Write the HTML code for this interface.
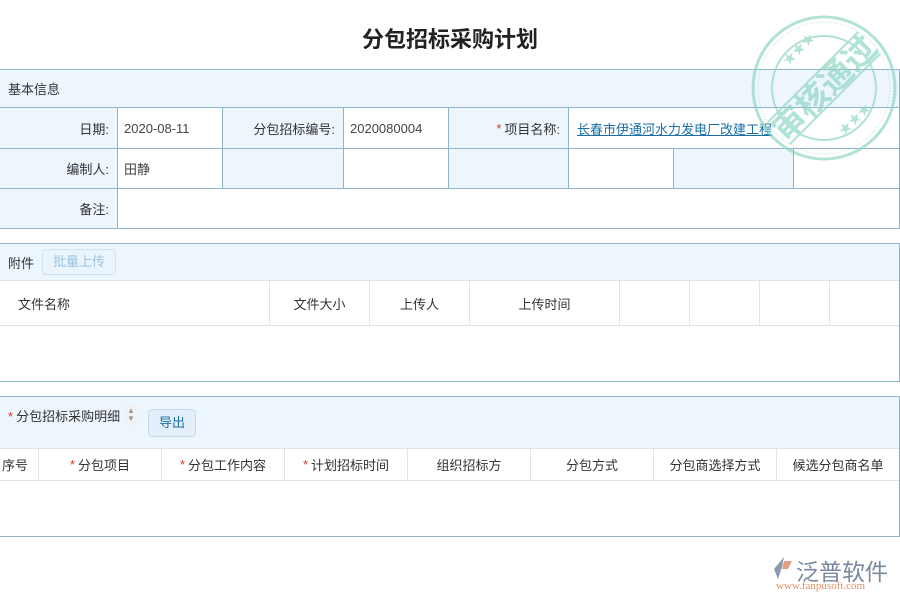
<!DOCTYPE html>
<html><head><meta charset="utf-8">
<style>
*{margin:0;padding:0;box-sizing:border-box}
body{width:900px;height:600px;background:#fff;position:relative;overflow:hidden;font-family:"Liberation Sans","Noto Sans CJK SC",sans-serif;font-size:13px;color:#333}
.a{position:absolute}
.t{position:absolute;left:0;width:900px;top:22px;text-align:center;font-size:22px;font-weight:bold;color:#222}
.c{position:absolute;border-right:1px solid #8fb3c8;border-bottom:1px solid #8fb3c8;display:flex;align-items:center}
.l{background:#eef6fd;justify-content:flex-end;padding-right:8px}
.v{background:#fff;padding-left:6px;color:#444}
.hd{background:#eef6fd}
.th{position:absolute;border-right:1px solid #dde3e8;display:flex;align-items:center;justify-content:center;height:100%;top:0}
.r{color:#e03030;margin-right:3px}
</style></head><body>
<div class="t">分包招标采购计划</div>

<div class="a hd" style="left:0;top:69px;width:900px;height:39px;border-top:1px solid #8fb3c8;border-bottom:1px solid #8fb3c8;border-right:1px solid #8fb3c8"></div>
<div class="a" style="left:8px;top:79px">基本信息</div>
<div class="c l" style="left:0;top:108px;width:118px;height:41px">日期:</div>
<div class="c v" style="left:118px;top:108px;width:105px;height:41px">2020-08-11</div>
<div class="c l" style="left:223px;top:108px;width:121px;height:41px">分包招标编号:</div>
<div class="c v" style="left:344px;top:108px;width:105px;height:41px">2020080004</div>
<div class="c l" style="left:449px;top:108px;width:120px;height:41px"><span class="r">*</span>项目名称:</div>
<div class="c v" style="left:569px;top:108px;width:331px;height:41px;color:#1a6fa8;text-decoration:underline;padding-left:8px">长春市伊通河水力发电厂改建工程</div>
<div class="c l" style="left:0;top:149px;width:118px;height:40px">编制人:</div>
<div class="c v" style="left:118px;top:149px;width:105px;height:40px">田静</div>
<div class="c l" style="left:223px;top:149px;width:121px;height:40px"></div>
<div class="c v" style="left:344px;top:149px;width:105px;height:40px"></div>
<div class="c l" style="left:449px;top:149px;width:120px;height:40px"></div>
<div class="c v" style="left:569px;top:149px;width:105px;height:40px"></div>
<div class="c l" style="left:674px;top:149px;width:120px;height:40px"></div>
<div class="c v" style="left:794px;top:149px;width:106px;height:40px"></div>
<div class="c l" style="left:0;top:189px;width:118px;height:40px">备注:</div>
<div class="c v" style="left:118px;top:189px;width:782px;height:40px"></div>

<div class="a" style="left:0;top:243px;width:900px;height:139px;border-top:1px solid #8fb3c8;border-bottom:1px solid #8fb3c8;border-right:1px solid #8fb3c8"></div>
<div class="a hd" style="left:0;top:244px;width:899px;height:37px;border-bottom:1px solid #dde3e8"></div>
<div class="a" style="left:8px;top:253px">附件</div>
<div class="a" style="left:42px;top:249px;width:74px;height:26px;border:1px solid #cfe3f2;border-radius:4px;background:#eaf4fc;color:#9cc4e0;text-align:center;line-height:24px">批量上传</div>
<div class="a" style="left:0;top:281px;width:899px;height:45px;border-bottom:1px solid #dde3e8">
<div class="th" style="left:0;width:270px;justify-content:flex-start;padding-left:18px">文件名称</div>
<div class="th" style="left:270px;width:100px">文件大小</div>
<div class="th" style="left:370px;width:100px">上传人</div>
<div class="th" style="left:470px;width:150px">上传时间</div>
<div class="th" style="left:620px;width:70px"></div>
<div class="th" style="left:690px;width:70px"></div>
<div class="th" style="left:760px;width:70px"></div>
</div>

<div class="a" style="left:0;top:396px;width:900px;height:141px;border-top:1px solid #8fb3c8;border-bottom:1px solid #8fb3c8;border-right:1px solid #8fb3c8"></div>
<div class="a hd" style="left:0;top:397px;width:899px;height:52px;border-bottom:1px solid #dde3e8"></div>
<div class="a" style="left:8px;top:406px"><span class="r">*</span>分包招标采购明细</div>
<div class="a" style="left:125px;top:405px;width:12px;height:20px;background:#f2f2f2;color:#999;font-size:8px;line-height:8px;text-align:center;padding-top:2px">▲<br>▼</div>
<div class="a" style="left:148px;top:409px;width:48px;height:28px;border:1px solid #c4dcee;border-radius:4px;background:#e3f0fb;color:#1a6fa8;text-align:center;line-height:26px">导出</div>
<div class="a" style="left:0;top:449px;width:899px;height:32px;border-bottom:1px solid #dde3e8">
<div class="th" style="left:0;width:39px;justify-content:flex-start;padding-left:2px">序号</div>
<div class="th" style="left:39px;width:123px"><span class="r">*</span>分包项目</div>
<div class="th" style="left:162px;width:123px"><span class="r">*</span>分包工作内容</div>
<div class="th" style="left:285px;width:123px"><span class="r">*</span>计划招标时间</div>
<div class="th" style="left:408px;width:123px">组织招标方</div>
<div class="th" style="left:531px;width:123px">分包方式</div>
<div class="th" style="left:654px;width:123px">分包商选择方式</div>
<div class="th" style="left:777px;width:122px;border-right:none">候选分包商名单</div>
</div>

<svg class="a" style="left:750px;top:14px;opacity:.7" width="148" height="148" viewBox="0 0 148 148">
<g fill="none" stroke="#8fd6c4">
<circle cx="74" cy="74" r="71" stroke-width="3"/>
<circle cx="74" cy="74" r="66" stroke-width="1" stroke-dasharray="1 2"/>
<circle cx="74" cy="74" r="52" stroke-width="2"/>
<line x1="18" y1="108" x2="108" y2="18" stroke-width="2"/>
<line x1="40" y1="130" x2="130" y2="40" stroke-width="2"/>
</g>
<text x="74" y="86" text-anchor="middle" font-size="33" font-weight="bold" fill="#8fd6c4" transform="rotate(-45 74 74)" font-family="Noto Sans CJK SC,sans-serif">审核通过</text>
<text x="38" y="52" font-size="13" fill="#8fd6c4" transform="rotate(-45 38 52)">★★★</text>
<text x="94" y="122" font-size="13" fill="#8fd6c4" transform="rotate(-45 94 122)">★★★</text>
</svg>

<svg class="a" style="left:770px;top:555px" width="26" height="26" viewBox="0 0 26 26">
<path d="M14 2 L4 14 L8 24 L12 12 Z" fill="#8a9aae"/>
<path d="M14 6 L22 6 L18 14 L12 14 Z" fill="#e0a080"/>
</svg>
<div class="a" style="left:796px;top:553px;font-size:23px;color:#7a8a9e">泛普软件</div>
<div class="a" style="left:776px;top:580px;font-size:11px;color:#e0906a;font-family:'Liberation Serif',serif">www.fanpusoft.com</div>
</body></html>
